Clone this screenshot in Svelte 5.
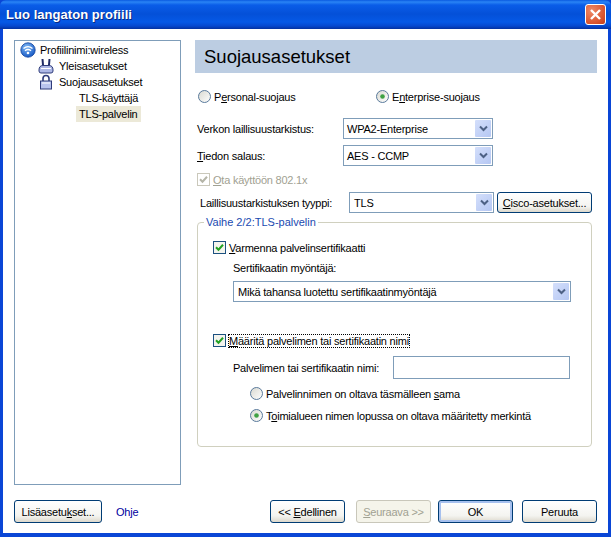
<script>
</script>

{#snippet chev()}
  <span class="arrow"><svg width="9" height="7" viewBox="0 0 9 7"><path d="M1 1.5 L4.5 5 L8 1.5" fill="none" stroke="#4d6185" stroke-width="2"/></svg></span>
{/snippet}
{#snippet radio(on)}
  <span class="radio"><svg width="13" height="13" viewBox="0 0 13 13"><defs><linearGradient id={on ? 'ra' : 'rb'} x1="0" y1="0" x2="1" y2="1"><stop offset="0" stop-color="#d8d8d0"/><stop offset="1" stop-color="#ffffff"/></linearGradient></defs><circle cx="6.5" cy="6.5" r="6" fill="url(#{on ? 'ra' : 'rb'})" stroke="#5a7a9c"/>{#if on}<circle cx="6.5" cy="6.5" r="2.3" fill="#3fa143"/>{/if}</svg></span>
{/snippet}
{#snippet check(disabled)}
  <span class="check" class:off={disabled}><svg width="9" height="9" viewBox="0 0 9 9"><path d="M1 4.2 L3.5 6.7 L8 1.8" fill="none" stroke={disabled ? '#b5b5a8' : '#21a121'} stroke-width="2"/></svg></span>
{/snippet}

<div class="window">
  <header class="titlebar">
    <span class="title">Luo langaton profiili</span>
    <span class="close"><svg width="13" height="13" viewBox="0 0 13 13"><path d="M2 2 L11 11 M11 2 L2 11" stroke="#fff" stroke-width="2.4"/></svg></span>
  </header>
  <div class="client">
    <div class="main">
      <nav class="tree">
        <div class="node n0">
          <svg class="ico" width="16" height="16" viewBox="0 0 16 16"><defs><radialGradient id="g" cx=".4" cy=".3" r=".8"><stop offset="0" stop-color="#7fb8f5"/><stop offset="1" stop-color="#0b4fc0"/></radialGradient></defs><circle cx="8" cy="8" r="7.2" fill="url(#g)" stroke="#0c3f9c" stroke-width=".8"/><path d="M3.5 6.5 Q8 2.8 12.5 6.5 M5 8.7 Q8 6.2 11 8.7" fill="none" stroke="#fff" stroke-width="1.4"/><circle cx="8" cy="11" r="1.3" fill="#fff"/></svg>
          <span>Profiilinimi:wireless</span>
        </div>
        <div class="node n1">
          <svg class="ico" width="16" height="16" viewBox="0 0 16 16"><path d="M4.5 1 L5 7 M11.5 1 L11 7" stroke="#1f2a66" stroke-width="2"/><path d="M1 12 Q1 7.5 5 7.5 H11 Q15 7.5 15 12 V13 Q15 15 13 15 H3 Q1 15 1 13 Z" fill="#aeb8e6" stroke="#2f3c7a"/><path d="M3 10.5h10" stroke="#fff"/></svg>
          <span>Yleisasetukset</span>
        </div>
        <div class="node n1">
          <svg class="ico" width="16" height="16" viewBox="0 0 16 16"><path d="M5 7 V4.5 a3 3 0 0 1 6 0 V7" fill="none" stroke="#2f3c7a" stroke-width="1.6"/><rect x="2.5" y="7" width="11" height="8" fill="#b9c4ee" stroke="#2f3c7a"/><path d="M4 9h8" stroke="#fff"/></svg>
          <span>Suojausasetukset</span>
        </div>
        <div class="node n2"><span>TLS-käyttäjä</span></div>
        <div class="node n2"><span class="sel">TLS-palvelin</span></div>
      </nav>
      <section class="panel">
        <h1>Suojausasetukset</h1>
        <div class="modes">
          <label class="opt personal">{@render radio(false)}<span>P<u>e</u>rsonal-suojaus</span></label>
          <label class="opt">{@render radio(true)}<span>E<u>n</u>terprise-suojaus</span></label>
        </div>
        <div class="row r1"><span class="lab">Verkon laillisuustarkistus:</span><div class="select w150"><span>WPA2-Enterprise</span>{@render chev()}</div></div>
        <div class="row r2"><span class="lab"><u>T</u>iedon salaus:</span><div class="select w150"><span>AES - CCMP</span>{@render chev()}</div></div>
        <label class="opt disabled">{@render check(true)}<span><u>O</u>ta käyttöön 802.1x</span></label>
        <div class="row r4">
          <span class="lab lab4">Laillisuustarkistuksen tyyppi:</span>
          <div class="select w144"><span>TLS</span>{@render chev()}</div>
          <button class="btn cisco"><u>C</u>isco-asetukset...</button>
        </div>
        <fieldset class="group">
          <legend>Vaihe 2/2:TLS-palvelin</legend>
          <label class="opt c1">{@render check(false)}<span><u>V</u>armenna palvelinsertifikaatti</span></label>
          <div class="issuer-label">Sertifikaatin myöntäjä:</div>
          <div class="select wide"><span>Mikä tahansa luotettu sertifikaatinmyöntäjä</span>{@render chev()}</div>
          <label class="opt c2">{@render check(false)}<span class="focus"><u>M</u>ääritä palvelimen tai sertifikaatin nimi</span></label>
          <div class="namerow"><span>Palvelimen tai sertifikaatin nimi:</span><div class="input"></div></div>
          <label class="opt sub s1">{@render radio(false)}<span>Palvelinnimen on oltava täsmälleen <u>s</u>ama</span></label>
          <label class="opt sub s2">{@render radio(true)}<span>T<u>o</u>imialueen nimen lopussa on oltava määritetty merkintä</span></label>
        </fieldset>
      </section>
    </div>
    <footer class="foot">
      <button class="btn more">Lisäasetu<u>k</u>set...</button>
      <span class="help">Ohje</span>
      <span class="spacer"></span>
      <button class="btn nav">&lt;&lt; <u>E</u>dellinen</button>
      <button class="btn nav inactive"><u>S</u>euraava &gt;&gt;</button>
      <button class="btn nav ok">OK</button>
      <button class="btn nav cancel">Peruuta</button>
    </footer>
  </div>
</div>

<style>
  :global(body) { margin: 0; }
  .window {
    width: 611px; height: 537px; display: flex; flex-direction: column; box-sizing: border-box;
    background: #0a46d6; font-family: "Liberation Sans", Arial, sans-serif; font-size: 11px; letter-spacing: -.22px; color: #000;
    overflow: hidden;
  }
  .titlebar {
    height: 29px; flex: none; display: flex; align-items: center; justify-content: space-between;
    padding: 0 5px 1px 6px; box-sizing: border-box;
    background: linear-gradient(#0a5ae0 0, #2a84f5 2px, #0a5de8 5px, #0450d8 14px, #0559e6 22px, #0548cf 26px, #03319f 29px);
    border-radius: 6px 6px 0 0;
  }
  .title { color: #fff; font: bold 13px "Liberation Sans", sans-serif; letter-spacing: .05px; text-shadow: 1px 1px #0a2a80; }
  .close {
    width: 21px; height: 21px; box-sizing: border-box; border: 1px solid #fff; border-radius: 3px;
    background: radial-gradient(circle at 30% 30%, #ee8a68, #d8522c 70%, #c23c18);
    display: flex; align-items: center; justify-content: center;
  }
  .client {
    flex: 1; background: #fff; margin: 0 3px 4px 3px; padding: 11px 11px 10px;
    display: flex; flex-direction: column; min-height: 0;
  }
  .main { display: flex; gap: 14px; }
  .tree {
    width: 167px; height: 445px; box-sizing: border-box; border: 1px solid #7f9db9; padding-top: 1px; flex: none;
  }
  .node { display: flex; align-items: center; height: 16px; white-space: nowrap; gap: 4px; }
  .n0 { padding-left: 5px; }
  .n1 { padding-left: 23px; gap: 5px; }
  .n2 { padding-left: 61px; }
  .n2 span { padding: 0 3px; }
  .sel { background: #ece9d8; line-height: 16px; }
  .panel { width: 402px; flex: none; }
  h1 {
    margin: 0; height: 33px; line-height: 33px; background: #bccde2; padding-left: 9px;
    font-size: 18.5px; font-weight: normal; letter-spacing: 0;
  }
  .modes { display: flex; margin: 17px 0 0 3px; }
  .personal { width: 178px; }
  .opt { display: flex; align-items: center; white-space: nowrap; }
  .radio { width: 13px; height: 13px; margin-right: 3px; flex: none; display: block; }
  .radio svg { display: block; }
  .check {
    width: 13px; height: 13px; box-sizing: border-box; border: 1px solid #1c5180; background: #f4f4ee; margin-right: 3px;
    display: flex; align-items: center; justify-content: center; flex: none;
  }
  .check.off { border-color: #cac8bb; background: #fff; }
  .row { display: flex; align-items: center; }
  .r1 { margin-top: 15px; }
  .r2 { margin-top: 6px; }
  .lab { width: 148px; padding-left: 2px; box-sizing: border-box; flex: none; }
  .lab4 { width: 154px; padding-left: 5px; }
  .select {
    height: 21px; box-sizing: border-box; border: 1px solid #7f9db9; background: #fff; display: flex; align-items: center;
    justify-content: space-between; padding: 0 1px 0 4px; white-space: nowrap;
  }
  .w150 { width: 150px; padding-left: 3px; }
  .w144 { width: 145px; }
  .wide { width: 338px; margin-left: 35px; }
  .arrow {
    width: 16px; height: 17px; background: linear-gradient(135deg, #d4dffb, #b5c7f3); border-radius: 1px;
    display: flex; align-items: center; justify-content: center;
  }
  .disabled { margin: 7px 0 0 2px; color: #a1a192; height: 13px; }
  .r4 { margin-top: 6px; }
  .btn {
    font: inherit; letter-spacing: inherit; color: #000; height: 21px; box-sizing: border-box; border: 1px solid #003c74; border-radius: 3px; padding: 0;
    background: linear-gradient(#fff, #f4f4f0 70%, #dcd8cc);
  }
  .cisco { width: 95px; margin-left: 3px; }
  .group {
    margin: 3px 0 0 2px; width: 395px; height: 231px; box-sizing: border-box; border: 1px solid #d0d0bf; border-radius: 4px;
    padding: 0; min-inline-size: 0;
  }
  legend { color: #1a4ab0; margin-left: 6px; padding: 0 2px; line-height: 13px; letter-spacing: 0; }
  .c1 { margin: 12px 0 0 15px; }
  .issuer-label { margin: 7px 0 0 35px; line-height: 14px; }
  .group .select { margin-top: 6px; }
  .c2 { margin: 32px 0 0 15px; }
  .focus { outline: 1px dotted #000; }
  .namerow { display: flex; align-items: center; margin: 9px 0 0 35px; }
  .namerow span { width: 160px; }
  .input { width: 177px; height: 23px; box-sizing: border-box; border: 1px solid #7f9db9; }
  .sub { margin-left: 52px; }
  .s1 { margin-top: 8px; }
  .s2 { margin-top: 9px; }
  .foot { display: flex; margin-top: 15px; align-items: center; }
  .foot .btn { height: 23px; }
  .more { width: 88px; }
  .help { color: #0000a0; margin-left: 14px; }
  .spacer { flex: 1; }
  .nav { width: 75px; margin-left: 9px; }
  .nav:first-of-type { margin-left: 0; }
  .inactive { border-color: #c9c7ba; background: #f5f4ea; color: #a1a192; margin-left: 11px; }
  .ok { margin-left: 7px; border-color: #003c74; box-shadow: inset 0 0 0 2px #a6c0ee; }
</style>
